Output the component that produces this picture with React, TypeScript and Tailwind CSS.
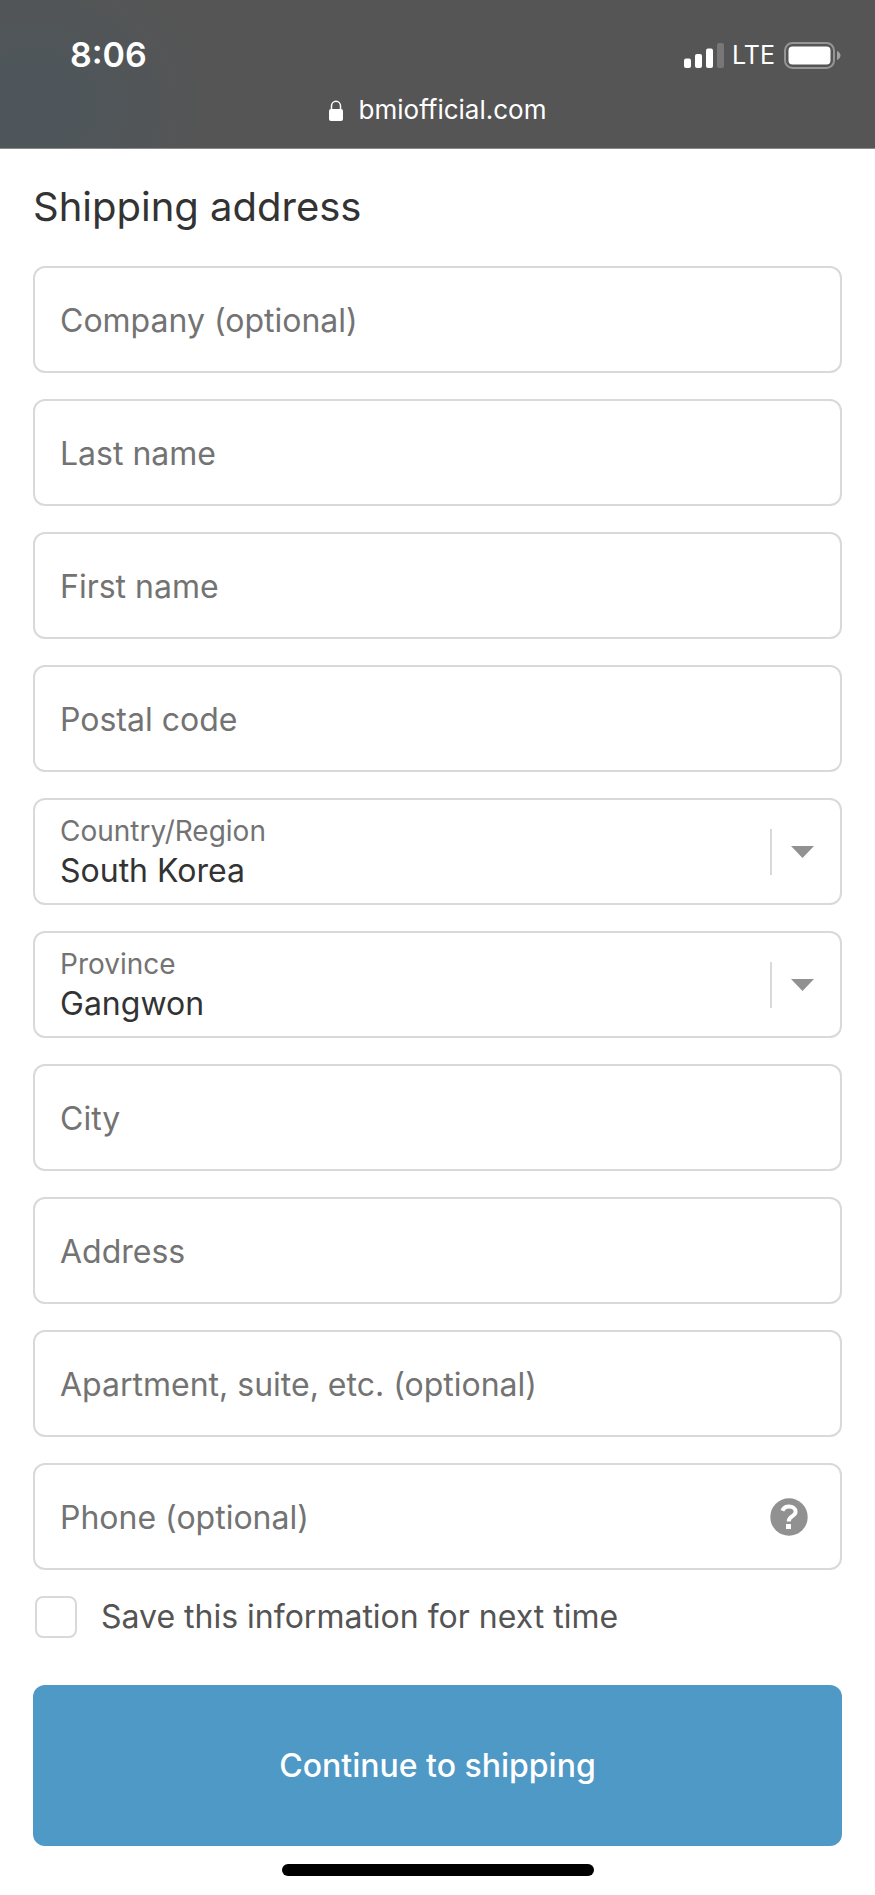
import { useState } from 'react';

interface TextFieldProps {
  id: string;
  label: string;
  type?: string;
  help?: boolean;
}

interface SelectFieldProps {
  id: string;
  label: string;
  options: string[];
}

function SignalIcon() {
  return (
    <svg className="w-10 h-[26px]" viewBox="0 0 40 26" fill="#fff" aria-hidden="true">
      <rect x="0" y="16.500" width="7" height="9.500" rx="2" />
      <rect x="11" y="12" width="7" height="14" rx="2" />
      <rect x="22" y="6.500" width="7" height="19.500" rx="2" />
      <rect x="33" y="1" width="7" height="25" rx="2" fillOpacity="0.2" />
    </svg>
  );
}

function BatteryIcon() {
  return (
    <svg className="w-[57px] h-[27px]" viewBox="0 0 57 27" aria-hidden="true">
      <rect x="1" y="1" width="49" height="25" rx="7.500" fill="none" stroke="#fff" strokeOpacity="0.38" strokeWidth="2" />
      <rect x="4.500" y="4.500" width="42" height="18" rx="4" fill="#fff" />
      <path d="M53 9c2.300 1 3.500 2.600 3.500 4.500s-1.200 3.500-3.500 4.500z" fill="#fff" fillOpacity="0.45" />
    </svg>
  );
}

function LockIcon() {
  return (
    <svg className="w-[14px] h-[21px]" viewBox="0 0 14 21" aria-hidden="true">
      <path d="M2.500 10V6a4.500 4.700 0 0 1 9 0v4" fill="none" stroke="#fff" strokeWidth="1.500" />
      <rect x="0" y="9" width="14" height="12" rx="2" fill="#fff" />
    </svg>
  );
}

function StatusBar() {
  return (
    <header className="h-[149px] border-b border-[#8a8a8a] bg-[#555] bg-[radial-gradient(ellipse_180px_150px_at_30px_105px,#4e565b_20%,#555555_100%)] text-white">
      <div className="flex items-center justify-between pl-[70px] pr-[34px] pt-8">
        <span className="text-[34px] leading-[44px] font-semibold">8:06</span>
        <div className="flex items-center">
          <SignalIcon />
          <span className="ml-2 mr-[9px] text-[25px] leading-[46px]">LTE</span>
          <BatteryIcon />
        </div>
      </div>
      <div className="flex items-center justify-center gap-4 pt-[14px]">
        <LockIcon />
        <span className="text-[26px] leading-9">bmiofficial.com</span>
      </div>
    </header>
  );
}

function TextField({ id, label, type = 'text', help = false }: TextFieldProps) {
  return (
    <div className="flex items-center h-[107px] border-2 border-[#d9d9d9] rounded-xl bg-white">
      <input
        id={id}
        type={type}
        aria-label={label}
        placeholder={label}
        className="flex-1 min-w-0 h-full pt-[2px] px-[25px] rounded-xl text-[32px] text-[#333] placeholder:text-[#737373] placeholder:opacity-100 outline-none"
      />
      {help && (
        <button type="button" aria-label="Phone help" className="mr-8">
          <svg className="w-[38px] h-[38px]" viewBox="0 0 38 38" aria-hidden="true">
            <circle cx="19" cy="19" r="18.700" fill="#919191" />
            <path
              d="M12.400 12.800C13.600 9.900 16 8.600 19 8.600c4 0 6.600 2 6.600 5.200 0 4.600-6.900 4.200-6.900 9.700"
              fill="none"
              stroke="#fff"
              strokeWidth="4"
            />
            <rect x="16" y="26" width="5" height="5" fill="#fff" />
          </svg>
        </button>
      )}
    </div>
  );
}

function SelectField({ id, label, options }: SelectFieldProps) {
  const [value, setValue] = useState(options[0]);

  return (
    <div className="flex items-center h-[107px] border-2 border-[#d9d9d9] rounded-xl bg-white">
      <div className="flex-1 min-w-0 pl-[25px] pt-[2px]">
        <label htmlFor={id} className="block text-[28px] leading-9 text-[#737373]">
          {label}
        </label>
        <select
          id={id}
          value={value}
          onChange={(e) => setValue(e.target.value)}
          className="block w-full appearance-none bg-transparent text-[32px] leading-[44px] text-[#333] outline-none"
        >
          {options.map((option) => (
            <option key={option}>{option}</option>
          ))}
        </select>
      </div>
      <div className="flex items-center h-[46px] mr-[26px] pl-[19px] border-l-2 border-[#d9d9d9]">
        <svg className="w-[23px] h-3" viewBox="0 0 23 12" aria-hidden="true">
          <path d="M0 0h23L11.500 12z" fill="#919191" />
        </svg>
      </div>
    </div>
  );
}

export default function App() {
  const [save, setSave] = useState(false);

  return (
    <div className="min-h-screen bg-white font-['Inter','Liberation_Sans',sans-serif]">
      <StatusBar />
      <main className="px-[33px] pt-8">
        <form onSubmit={(e) => e.preventDefault()}>
          <h1 className="text-[40px] leading-[52px] text-[#333]">Shipping address</h1>

          <div className="flex flex-col gap-[26px] mt-[33px]">
            <TextField id="company" label="Company (optional)" />
            <TextField id="last-name" label="Last name" />
            <TextField id="first-name" label="First name" />
            <TextField id="postal-code" label="Postal code" />
            <SelectField id="country" label="Country/Region" options={['South Korea', 'Japan', 'United States']} />
            <SelectField id="province" label="Province" options={['Gangwon', 'Gyeonggi', 'Seoul']} />
            <TextField id="city" label="City" />
            <TextField id="address" label="Address" />
            <TextField id="apartment" label="Apartment, suite, etc. (optional)" />
            <TextField id="phone" label="Phone (optional)" type="tel" help />
          </div>

          <div className="flex items-center mt-[26px] pl-[2px]">
            <input
              id="save-info"
              type="checkbox"
              checked={save}
              onChange={(e) => setSave(e.target.checked)}
              className="w-[42px] h-[42px] shrink-0 appearance-none rounded-lg border-2 border-[#d9d9d9] bg-white checked:bg-[#4f99c6]"
            />
            <label htmlFor="save-info" className="pl-6 text-[32px] leading-[42px] text-[#545454]">
              Save this information for next time
            </label>
          </div>

          <button
            type="submit"
            className="w-full h-[161px] mt-[47px] rounded-xl bg-[#4f99c6] text-[32px] font-medium text-white"
          >
            Continue to shipping
          </button>
        </form>
      </main>
      <div className="w-[312px] h-3 mx-auto mt-[18px] rounded-full bg-black" />
    </div>
  );
}
